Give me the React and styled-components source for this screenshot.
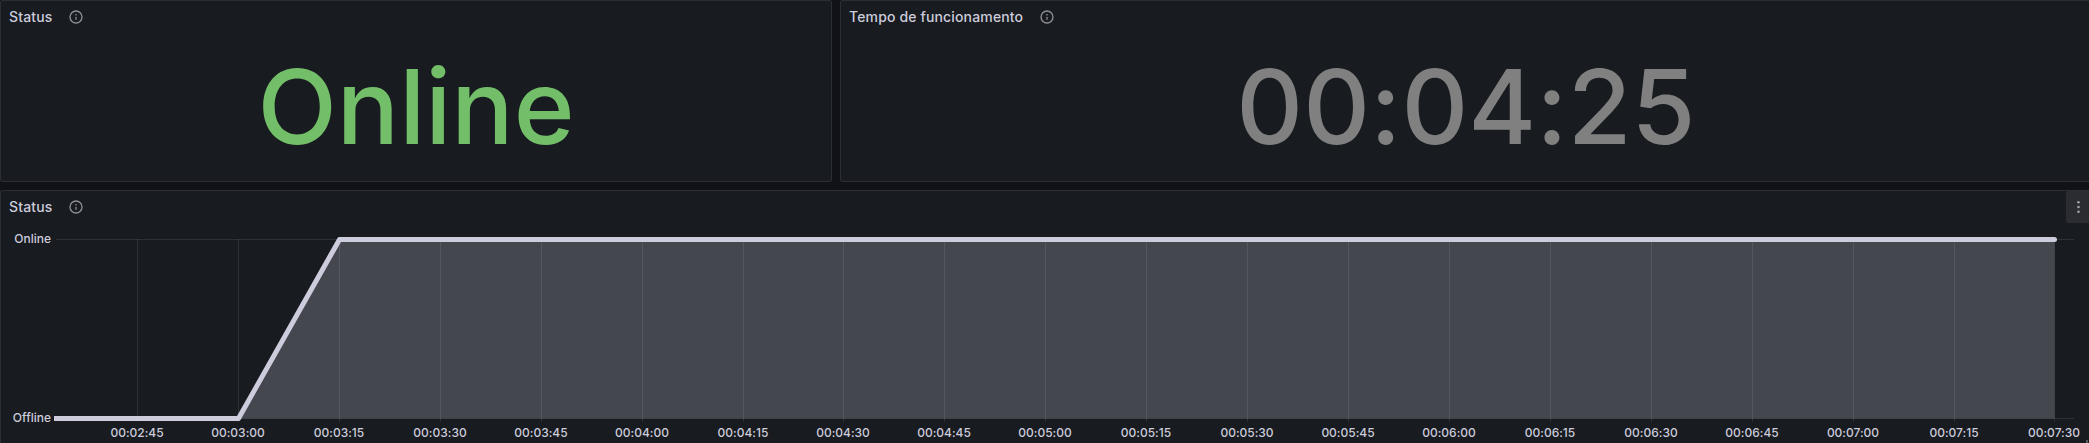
import React from "react";
import styled, { createGlobalStyle } from "styled-components";

const GlobalStyle = createGlobalStyle`
  *, *::before, *::after { box-sizing: border-box; }
  html, body { margin: 0; background: #111217; overflow: hidden; }
  body {
    font-family: Inter, "Liberation Sans", sans-serif;
    font-feature-settings: "calt" 0;
    color: #ccccdc;
  }
`;

const Dashboard = styled.main`
  width: 2089px;
  height: 443px;
  display: flex;
  flex-direction: column;
  gap: 8px;
  overflow: hidden;
`;

const Row = styled.div`
  display: flex;
  gap: 8px;
  width: 2092px;
  height: ${({ $height }) => $height}px;
  flex: none;
`;

const Panel = styled.section`
  position: relative;
  display: flex;
  flex-direction: column;
  width: ${({ $width }) => $width}px;
  flex: none;
  background: #181b1f;
  border: 1px solid #2d2e34;
  border-radius: 2px;
`;

const PanelHeader = styled.header`
  display: flex;
  align-items: center;
  height: 32px;
  flex: none;
  padding-left: 8px;
`;

const PanelTitle = styled.h2`
  margin: 0;
  font-size: 14px;
  font-weight: 500;
  line-height: 22px;
  letter-spacing: 0.0107em;
`;

const InfoIcon = styled.svg`
  display: block;
  width: 16px;
  height: 16px;
  margin-left: 16px;
  fill: #8e8e99;
`;

const MenuButton = styled.button`
  display: flex;
  align-items: center;
  justify-content: center;
  align-self: stretch;
  width: 25px;
  margin-left: auto;
  padding: 0;
  border: 0;
  border-radius: 2px;
  background: #2b2c31;
`;

const ResizeHandle = styled.span`
  position: absolute;
  right: 3px;
  bottom: 1px;
  width: 2px;
  height: 3px;
  background: #5b5c60;
`;

const StatValue = styled.div`
  flex: 1;
  display: flex;
  align-items: center;
  justify-content: center;
  font-size: 103.6px;
  font-weight: 500;
  line-height: 1.2;
  color: ${({ $color }) => $color};
`;

const Chart = styled.svg`
  display: block;
  width: 2089px;
  height: 219px;
  flex: none;
  font-family: Inter, "Liberation Sans", sans-serif;
  font-size: 12px;
  font-weight: 500;
`;

const AxisLabel = styled.text`
  fill: #ccccdc;
  text-anchor: ${({ $anchor }) => $anchor};
`;

const Info = () => (
  <InfoIcon viewBox="0 0 24 24">
    <path d="M12,2A10,10,0,1,0,22,12,10.01114,10.01114,0,0,0,12,2Zm0,18a8,8,0,1,1,8-8A8.00917,8.00917,0,0,1,12,20Zm0-8.5a1,1,0,0,0-1,1v3a1,1,0,0,0,2,0v-3A1,1,0,0,0,12,11.5Zm0-4a1.25,1.25,0,1,0,1.25,1.25A1.25,1.25,0,0,0,12,7.5Z" />
  </InfoIcon>
);

const Header = ({ title, children }) => (
  <PanelHeader>
    <PanelTitle>{title}</PanelTitle>
    <Info />
    {children}
  </PanelHeader>
);

const ticks = Array.from({ length: 20 }, (_, i) => {
  const total = 165 + i * 15;
  const mm = String(Math.floor(total / 60)).padStart(2, "0");
  const ss = String(total % 60).padStart(2, "0");
  return { x: Math.round(137 + i * 100.92) + 0.5, label: `00:${mm}:${ss}` };
});

const StatusChart = () => (
  <Chart viewBox="1 223 2089 219">
    <g stroke="#f0faff" strokeOpacity="0.1">
      {ticks.map((t) => (
        <path key={t.label} d={`M${t.x} 239V422`} />
      ))}
      <path d="M56 239.5H2074M56 418.5H2074" />
    </g>
    <path d="M54 418.5H238.5L339.5 239.5H2054.5V418.5Z" fill="#ccccdc" fillOpacity="0.25" />
    <path d="M54 418.5H238.5L339.5 239.5H2054.5" fill="none" stroke="#ccccdc" strokeWidth="5" strokeLinejoin="round" />
    <circle cx="2054.5" cy="239.5" r="2.5" fill="#ccccdc" />
    <AxisLabel $anchor="end" x="51" y="243">Online</AxisLabel>
    <AxisLabel $anchor="end" x="51" y="422">Offline</AxisLabel>
    {ticks.map((t) => (
      <AxisLabel key={t.label} $anchor="middle" x={t.x - 0.5} y="437">
        {t.label}
      </AxisLabel>
    ))}
  </Chart>
);

export default function App() {
  return (
    <>
      <GlobalStyle />
      <Dashboard>
        <Row $height={182}>
          <Panel $width={832}>
            <Header title="Status" />
            <StatValue $color="#73bf69">Online</StatValue>
          </Panel>
          <Panel $width={1252}>
            <Header title="Tempo de funcionamento" />
            <StatValue $color="#808080">00:04:25</StatValue>
          </Panel>
        </Row>
        <Row $height={255}>
          <Panel $width={2092}>
            <Header title="Status">
              <MenuButton>
                <svg width="5" height="14" viewBox="0 0 5 14" fill="#a0a0aa">
                  <circle cx="2.5" cy="2.3" r="1.3" />
                  <circle cx="2.5" cy="7" r="1.3" />
                  <circle cx="2.5" cy="11.7" r="1.3" />
                </svg>
              </MenuButton>
            </Header>
            <StatusChart />
            <ResizeHandle />
          </Panel>
        </Row>
      </Dashboard>
    </>
  );
}
